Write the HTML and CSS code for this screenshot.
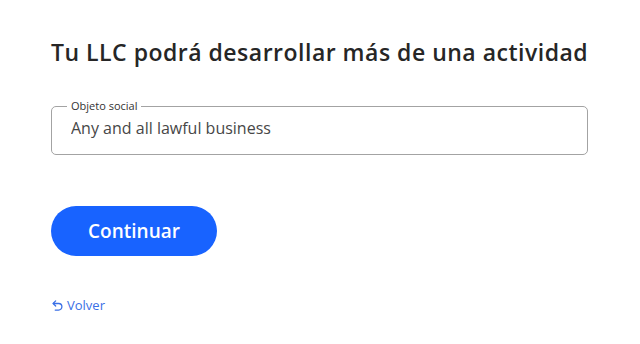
FILE: index.html
```html
<!DOCTYPE html>
<html lang="es">
<head>
    <meta charset="UTF-8">
    <meta name="viewport" content="width=device-width, initial-scale=1.0">
    <title>Objeto social</title>
    <link rel="stylesheet" href="styles.css">
</head>
<body>
    <div class="step">
        <h1 class="title">Tu LLC podrá desarrollar más de una actividad</h1>

        <fieldset class="field">
            <legend class="field-label">Objeto social</legend>
            <input class="field-input" type="text" value="Any and all lawful business">
        </fieldset>

        <button class="next-button">Continuar</button>

        <a class="back-link" href="#">
            <svg class="back-icon" width="11" height="11" viewBox="0 0 12 12" fill="none" stroke="currentColor" stroke-width="1.4" stroke-linecap="round" stroke-linejoin="round">
                <path d="M4 1 L1.2 3.8 L4 6.6"/>
                <path d="M1.5 3.8 H7.2 a3.6 3.6 0 0 1 0 7.2 H3.5"/>
            </svg>
            Volver
        </a>
    </div>
</body>
</html>
```

FILE: styles.css
```css
body {
    margin: 0;
    background: #fff;
    font-family: "Open Sans", Lato, sans-serif;
}

.step {
    display: flex;
    flex-direction: column;
    align-items: flex-start;
    padding: 38px 52px 0 51px;
}

.title {
    margin: 0;
    font-size: 23px;
    line-height: 28px;
    font-weight: 600;
    color: #262626;
    letter-spacing: 0.5px;
    white-space: nowrap;
}

.field {
    box-sizing: border-box;
    align-self: stretch;
    margin: 34px 0 0 0;
    padding: 0 14px 0 15px;
    height: 55px;
    border: 1px solid #a3a3a3;
    border-radius: 5px;
}

.field-label {
    padding: 0 4px;
    font-size: 11px;
    line-height: 12px;
    color: #333;
}

.field-input {
    width: 100%;
    margin-top: 5px;
    padding: 0 4px;
    border: none;
    outline: none;
    background: transparent;
    font-family: inherit;
    font-size: 16px;
    line-height: 22px;
    color: #474747;
}

.next-button {
    margin-top: 51px;
    width: 166px;
    height: 50px;
    border: none;
    border-radius: 25px;
    background: #1863ff;
    color: #fff;
    font-family: inherit;
    font-size: 19px;
    font-weight: 600;
    cursor: pointer;
}

.back-link {
    display: flex;
    align-items: center;
    gap: 4px;
    margin-top: 40px;
    margin-left: 1px;
    color: #3a6fe6;
    font-size: 13px;
    text-decoration: none;
}
```
